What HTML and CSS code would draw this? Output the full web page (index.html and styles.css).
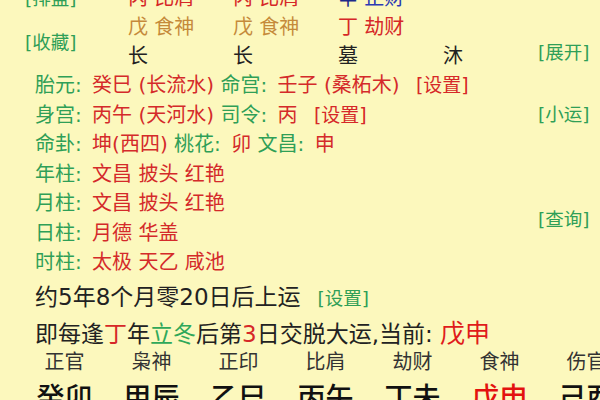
FILE: index.html
```html
<!DOCTYPE html>
<html lang="zh">
<head>
<meta charset="utf-8">
<title>八字排盘</title>
<link rel="stylesheet" href="styles.css">
</head>
<body>
<div class="sheet">
  <div class="upper">
    <div class="main">
      <div class="pillars">
        <span class="link">[排盘]</span>
        <span class="red">丙 比肩</span>
        <span class="red">丙 比肩</span>
        <span class="blue"><span class="navy">辛</span> 正财</span>
        <span></span>
        <span class="link fav">[收藏]</span>
        <span class="tan">戊 食神</span>
        <span class="tan">戊 食神</span>
        <span class="red">丁 劫财</span>
        <span></span>
        <span class="dark">长</span>
        <span class="dark">长</span>
        <span class="dark">墓</span>
        <span class="dark">沐</span>
      </div>
      <div class="info">
        <p class="line"><span class="k">胎元:</span> <span class="v">癸巳 (长流水)</span> <span class="k">命宫:</span> <span class="v">壬子 (桑柘木)</span> <span class="set red">[设置]</span></p>
        <p class="line"><span class="k">身宫:</span> <span class="v">丙午 (天河水)</span> <span class="k">司令:</span> <span class="v">丙</span> <span class="set red">[设置]</span></p>
        <p class="line"><span class="k">命卦:</span> <span class="v">坤(西四)</span> <span class="k">桃花:</span> <span class="v">卯</span> <span class="k">文昌:</span> <span class="v">申</span></p>
        <p class="line"><span class="k">年柱:</span> <span class="v">文昌 披头 红艳</span></p>
        <p class="line"><span class="k">月柱:</span> <span class="v">文昌 披头 红艳</span></p>
        <p class="line"><span class="k">日柱:</span> <span class="v">月德 华盖</span></p>
        <p class="line"><span class="k">时柱:</span> <span class="v">太极 天乙 咸池</span></p>
      </div>
    </div>
    <div class="side">
      <span class="link side-open">[展开]</span>
      <span class="link side-small">[小运]</span>
      <span class="link side-query">[查询]</span>
    </div>
  </div>
  <div class="yun">
    <p class="yun-start">约5年8个月零20日后上运<span class="link yun-set">[设置]</span></p>
    <p class="yun-rule">即每逢<span class="red">丁</span>年<span class="green">立冬</span>后第<span class="red">3</span>日交脱大运,当前: <span class="now">戊申</span></p>
  </div>
  <div class="gods">
    <span>正官</span><span>枭神</span><span>正印</span><span>比肩</span><span>劫财</span><span>食神</span><span>伤官</span>
  </div>
  <div class="dayun">
    <span>癸卯</span><span>甲辰</span><span>乙巳</span><span>丙午</span><span>丁未</span><span class="cur">戊申</span><span>己酉</span>
  </div>
</div>
</body>
</html>
```
FILE: styles.css
```css
html, body {
  margin: 0;
  padding: 0;
  width: 600px;
  height: 400px;
  overflow: hidden;
  background: #fcf8bd;
}

.sheet {
  font-family: "DejaVu Sans", "Noto Sans CJK SC", sans-serif;
  color: #222;
  font-size: 20px;
}

p { margin: 0; }

.upper {
  display: flex;
  margin-top: -16px;
}

.main {
  width: 538px;
}

.pillars {
  display: grid;
  grid-template-columns: 128px 105px 105px 105px 95px;
  grid-auto-rows: 29px;
  line-height: 29px;
  white-space: nowrap;
}

.pillars .link { padding-left: 25px; }
.pillars .fav {
  grid-row: span 2;
  align-self: center;
  font-size: 18.5px;
}

.red { color: #d62828; }
.blue { color: #2c3bb4; }
.navy { color: #1c2a8a; }
.tan { color: #c58a3a; }
.dark { color: #222; }
.green { color: #2fa85a; }

.link {
  color: #2f9f57;
  font-size: 18.5px;
}

.info {
  padding-left: 35px;
}

.line {
  line-height: 29.5px;
  white-space: nowrap;
}

.k {
  color: #2f9f57;
  margin-right: 4px;
}

.v { color: #d42a2a; }

.set {
  margin-left: 10px;
  font-size: 19px;
}

.side {
  width: 62px;
  display: flex;
  flex-direction: column;
  align-items: flex-start;
  line-height: 30px;
}

.side-open { margin-top: 54px; }
.side-small { margin-top: 32px; }
.side-query { margin-top: 75px; }

.yun {
  padding-left: 35px;
  font-size: 23px;
  margin-top: 1px;
  white-space: nowrap;
}

.yun-start { line-height: 36px; }
.yun-rule { line-height: 34px; }

.yun-set {
  margin-left: 17px;
  font-size: 18.5px;
}

.now {
  color: #e01b1b;
  font-size: 25px;
}

.gods,
.dayun {
  display: grid;
  grid-template-columns: repeat(7, 87px);
  padding-left: 21px;
  text-align: center;
  white-space: nowrap;
}

.gods {
  line-height: 22px;
  font-size: 20px;
  color: #333;
}

.dayun {
  padding-top: 4px;
  line-height: 44px;
  font-size: 28px;
  font-weight: 500;
  color: #111;
}

.dayun .cur { color: #e3120f; }
```
